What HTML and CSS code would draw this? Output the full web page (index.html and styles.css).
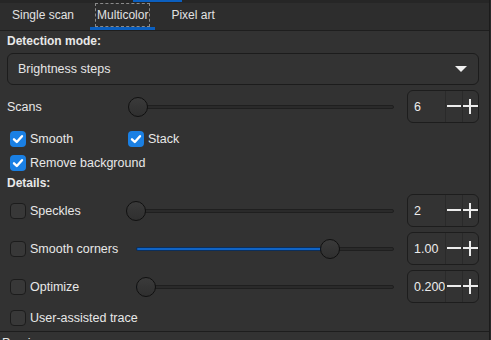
FILE: index.html
```html
<!DOCTYPE html>
<html lang="en">
<head>
    <meta charset="UTF-8">
    <meta name="viewport" content="width=device-width, initial-scale=1.0">
    <title>Trace bitmap - Multicolor</title>
    <link rel="stylesheet" href="styles.css">
</head>
<body>
    <div class="window">
        <div class="topbar"><div class="topbar-accent"></div></div>

        <div class="tabs">
            <div class="tab">Single scan</div>
            <div class="tab active"><span class="tab-focus">Multicolor</span></div>
            <div class="tab">Pixel art</div>
        </div>

        <div class="panel">
            <div class="section-title">Detection mode:</div>

            <div class="dropdown">
                <span>Brightness steps</span>
                <span class="dropdown-arrow"></span>
            </div>

            <div class="row row-scans">
                <div class="row-label">Scans</div>
                <div class="slider">
                    <div class="groove"></div>
                    <div class="knob" style="left: 0px"></div>
                </div>
                <div class="spin">
                    <div class="spin-value">6</div>
                    <div class="spin-btn minus"><span></span></div>
                    <div class="spin-btn plus"><span></span></div>
                </div>
            </div>

            <div class="check-row first-checks">
                <label class="check check-wide"><span class="box checked"><svg viewBox="0 0 16 16"><path d="M4 8.3 L6.8 11 L12 5.2"/></svg></span>Smooth</label>
                <label class="check"><span class="box checked"><svg viewBox="0 0 16 16"><path d="M4 8.3 L6.8 11 L12 5.2"/></svg></span>Stack</label>
            </div>
            <div class="check-row">
                <label class="check"><span class="box checked"><svg viewBox="0 0 16 16"><path d="M4 8.3 L6.8 11 L12 5.2"/></svg></span>Remove background</label>
            </div>

            <div class="section-title details-title">Details:</div>

            <div class="row row-detail first-detail">
                <label class="check row-label"><span class="box"></span>Speckles</label>
                <div class="slider">
                    <div class="groove"></div>
                    <div class="knob" style="left: 0px"></div>
                </div>
                <div class="spin">
                    <div class="spin-value">2</div>
                    <div class="spin-btn minus"><span></span></div>
                    <div class="spin-btn plus"><span></span></div>
                </div>
            </div>

            <div class="row row-detail">
                <label class="check row-label"><span class="box"></span>Smooth corners</label>
                <div class="slider">
                    <div class="groove"></div>
                    <div class="fill" style="width: 194px"></div>
                    <div class="knob" style="left: 194px"></div>
                </div>
                <div class="spin">
                    <div class="spin-value">1.00</div>
                    <div class="spin-btn minus"><span></span></div>
                    <div class="spin-btn plus"><span></span></div>
                </div>
            </div>

            <div class="row row-detail">
                <label class="check row-label"><span class="box"></span>Optimize</label>
                <div class="slider">
                    <div class="groove"></div>
                    <div class="fill" style="width: 10px"></div>
                    <div class="knob" style="left: 10px"></div>
                </div>
                <div class="spin">
                    <div class="spin-value">0.200</div>
                    <div class="spin-btn minus"><span></span></div>
                    <div class="spin-btn plus"><span></span></div>
                </div>
            </div>

            <div class="check-row last-row">
                <label class="check"><span class="box"></span>User-assisted trace</label>
            </div>
        </div>

        <div class="preview">Preview:</div>
    </div>
</body>
</html>
```

FILE: styles.css
```css
body {
    margin: 0;
    background-color: #2a2a2a;
    font-family: "Liberation Sans", Arial, sans-serif;
    font-size: 12px;
    color: #e6e6e6;
    overflow: hidden;
}
.window {
    width: 489px;
    height: 340px;
    border-right: 1px solid #1b1b1b;
    background-color: #323232;
    overflow: hidden;
}
.topbar {
    height: 3px;
    background-color: #262626;
}
.topbar-accent {
    margin-left: 133px;
    width: 49px;
    height: 2px;
    background-color: #0b5fbf;
}
.tabs {
    display: flex;
    gap: 9px;
    height: 27px;
    padding-left: 5px;
    background-color: #2d2d2d;
    border-bottom: 1px solid #1e1e1e;
}
.tab {
    display: flex;
    align-items: center;
    padding: 0 7px;
    color: #e2e2e2;
    border-bottom: 3px solid transparent;
}
.tab.active {
    border-bottom-color: #0b5fbf;
}
.tab-focus {
    display: flex;
    align-items: center;
    height: 22px;
    margin: 0 -2px;
    padding: 0 1px;
    border: 1px dashed #8a8a8a;
}
.panel {
    padding: 0 10px 1px 7px;
    border-bottom: 1px solid #1d1d1d;
}
.section-title {
    margin-top: 3px;
    line-height: 14px;
    font-weight: bold;
    color: #e8e8e8;
}
.details-title {
    margin-top: 1px;
}
.dropdown {
    display: flex;
    align-items: center;
    justify-content: space-between;
    height: 30px;
    margin-top: 5px;
    padding: 0 11px 0 10px;
    border: 1px solid #1c1c1c;
    border-radius: 6px;
    background-color: #333333;
    font-size: 12.5px;
}
.dropdown-arrow {
    width: 0;
    height: 0;
    border-left: 6px solid transparent;
    border-right: 6px solid transparent;
    border-top: 6px solid #f0f0f0;
}
.row {
    display: flex;
    align-items: center;
    height: 33px;
}
.row-scans {
    margin-top: 5px;
}
.row-scans .row-label {
    width: 121px;
    flex: none;
    font-size: 12.5px;
}
.row-detail {
    margin-top: 5px;
}
.row-detail.first-detail {
    margin-top: 4px;
}
.row-detail .row-label {
    width: 116px;
    flex: none;
}
.slider {
    position: relative;
    flex: 1;
    height: 20px;
    margin-right: 3px;
}
.groove {
    position: absolute;
    left: 10px;
    right: 10px;
    top: 8px;
    height: 2px;
    border: 1px solid #1f1f1f;
    border-radius: 3px;
    background-color: #2a2a2a;
}
.fill {
    position: absolute;
    left: 10px;
    top: 8px;
    height: 2px;
    border: 1px solid #0b2f5c;
    border-radius: 3px;
    background-color: #1064c6;
}
.knob {
    position: absolute;
    top: 0;
    width: 18px;
    height: 18px;
    border: 1px solid #101010;
    border-radius: 50%;
    background: linear-gradient(#3a3a3a, #2f2f2f);
}
.spin {
    display: flex;
    width: 70px;
    height: 31px;
    flex: none;
    border: 1px solid #1d1d1d;
    border-radius: 6px;
    background-color: #333333;
}
.spin-value {
    display: flex;
    align-items: center;
    width: 32px;
    padding-left: 6px;
    font-size: 12.5px;
    color: #ececec;
    white-space: nowrap;
}
.spin-btn {
    position: relative;
    border-left: 1px solid #2a2a2a;
}
.spin-btn.minus {
    width: 16px;
}
.spin-btn.plus {
    width: 15px;
}
.spin-btn span::before,
.spin-btn span::after {
    content: "";
    position: absolute;
    background-color: #ececec;
}
.minus span::before {
    left: 1px;
    top: 14px;
    width: 14px;
    height: 2px;
}
.plus span::before {
    left: 0;
    top: 14px;
    width: 15px;
    height: 2px;
}
.plus span::after {
    left: 6px;
    top: 8px;
    width: 2px;
    height: 15px;
}
.check-row {
    display: flex;
    align-items: center;
    height: 24px;
}
.check-row.first-checks {
    margin-top: 4px;
}
.last-row {
    margin-top: 3px;
}
.check {
    display: flex;
    align-items: center;
    gap: 4px;
    padding-left: 3px;
    font-size: 12.5px;
    color: #e8e8e8;
}
.check-wide {
    width: 115px;
}
.box {
    display: flex;
    align-items: center;
    justify-content: center;
    width: 14px;
    height: 14px;
    border: 1px solid #1c1c1c;
    border-radius: 4px;
    background-color: #383838;
}
.box.checked {
    width: 16px;
    height: 16px;
    border: none;
    background-color: #1a80e4;
}
.box svg {
    width: 16px;
    height: 16px;
}
.box svg path {
    fill: none;
    stroke: #ffffff;
    stroke-width: 2.4;
    stroke-linecap: round;
    stroke-linejoin: round;
}
.preview {
    padding: 4px 0 0 2px;
    font-size: 12.5px;
    color: #e6e6e6;
}
```
